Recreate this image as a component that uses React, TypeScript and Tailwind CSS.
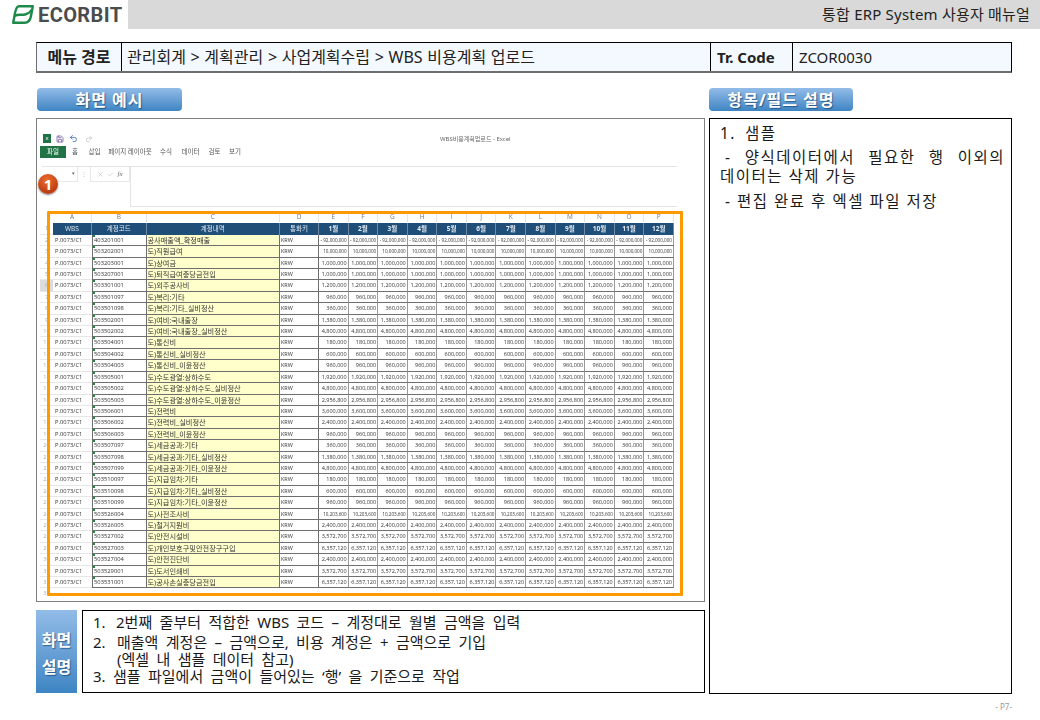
import { Check, Redo2, Save, Undo2, X } from 'lucide-react';

// code, name, monthly amount
const ROWS: [string, string, string][] = [
    ['403201001', '공사매출액_확정매출', '- 92,000,000'],
    ['503202001', '도)직원급여', '10,000,000'],
    ['503203001', '도)상여금', '1,000,000'],
    ['503207001', '도)퇴직급여충당금전입', '1,000,000'],
    ['503301001', '도)외주공사비', '1,200,000'],
    ['503501097', '도)복리:기타', '960,000'],
    ['503501098', '도)복리:기타_실비정산', '360,000'],
    ['503502001', '도)여비:국내출장', '1,380,000'],
    ['503502002', '도)여비:국내출장_실비정산', '4,800,000'],
    ['503504001', '도)통신비', '180,000'],
    ['503504002', '도)통신비_실비정산', '600,000'],
    ['503504003', '도)통신비_이윤정산', '960,000'],
    ['503505001', '도)수도광열:상하수도', '1,920,000'],
    ['503505002', '도)수도광열:상하수도_실비정산', '4,800,000'],
    ['503505003', '도)수도광열:상하수도_이윤정산', '2,956,800'],
    ['503506001', '도)전력비', '3,600,000'],
    ['503506002', '도)전력비_실비정산', '2,400,000'],
    ['503506003', '도)전력비_이윤정산', '960,000'],
    ['503507097', '도)세금공과:기타', '360,000'],
    ['503507098', '도)세금공과:기타_실비정산', '1,380,000'],
    ['503507099', '도)세금공과:기타_이윤정산', '4,800,000'],
    ['503510097', '도)지급임차:기타', '180,000'],
    ['503510098', '도)지급임차:기타_실비정산', '600,000'],
    ['503510099', '도)지급임차:기타_이윤정산', '960,000'],
    ['503526004', '도)사전조사비', '10,203,600'],
    ['503526005', '도)철거지원비', '2,400,000'],
    ['503527002', '도)안전시설비', '3,572,700'],
    ['503527003', '도)개인보호구및안전장구구입', '6,357,120'],
    ['503527004', '도)안전진단비', '2,400,000'],
    ['503529001', '도)도서인쇄비', '3,572,700'],
    ['503531001', '도)공사손실충당금전입', '6,357,120'],
];

const LETTERS = ['A', 'B', 'C', 'D', 'E', 'F', 'G', 'H', 'I', 'J', 'K', 'L', 'M', 'N', 'O', 'P'];
const MONTHS = Array.from({ length: 12 }, (_, i) => i);
const TABS = [
    ['홈', 'w-[18px]'],
    ['삽입', 'w-[21px]'],
    ['페이지 레이아웃', 'w-[50px]'],
    ['수식', 'w-[22px]'],
    ['데이터', 'w-[27px]'],
    ['검토', 'w-[21px]'],
    ['보기', 'w-[20px]'],
];

function Logo() {
    return (
        <div className="flex items-center w-[128px] h-[29px] pl-[12px] gap-[4px]">
            <svg width="22" height="19" viewBox="0 0 22 19" fill="none" stroke="#1c8a4a" strokeWidth="2.4" strokeLinejoin="round">
                <path d="M7 1.2H20.8L19 11C18.3 15 16 17.8 12.5 17.8H1.2L3 8C3.8 4 5 1.2 7 1.2Z" />
                <path d="M2.5 11C7 8.5 9 10.5 13 9.5C16 8.8 18.5 7 20 4.5" />
            </svg>
            <span className="font-['Roboto',sans-serif] font-bold text-[20px] leading-none text-[#4a4c4e] tracking-[0.4px]">ECORBIT</span>
        </div>
    );
}

function Pill({ label, width }: { label: string; width: string }) {
    return (
        <div className={`${width} h-[23px] rounded-[4px] bg-gradient-to-b from-[#92bce8] to-[#3d85c3] flex items-center justify-center text-white font-bold text-[16px] leading-none tracking-[1px] [text-shadow:1px_1px_1px_rgba(0,40,80,.55)]`}>
            {label}
        </div>
    );
}

function SheetGrid() {
    return (
        <div className="ml-[3px] mt-[5px] grid grid-cols-[13px_39px_54.5px_133.5px_39px_repeat(12,29.58px)] auto-rows-[11.42px] w-fit font-['Open_Sans','Noto_Sans_CJK_KR',sans-serif] text-[#333] leading-[11px] text-[5.5px] whitespace-nowrap">
            <div className="h-[10px]" />
            {LETTERS.map((l) => (
                <div key={l} className="h-[10px] text-center text-[#777] text-[6.5px] leading-[10px] border-r border-[#e4e4e4]">{l}</div>
            ))}

            <div className="text-center text-[#aaa] border-b border-[#e8e8e8]">1</div>
            {['WBS', '계정코드', '계정내역', '통화키'].map((h) => (
                <div key={h} className="bg-[#1f4e79] text-[#e4ecf4] text-center text-[6.5px] border-r border-[#6f8aa4]">{h}</div>
            ))}
            {MONTHS.map((m) => (
                <div key={m} className="bg-[#1f4e79] text-[#e4ecf4] font-bold text-[6.5px] text-center border-r border-[#6f8aa4]">{m + 1}월</div>
            ))}

            {ROWS.map(([code, name, amount], i) => (
                <div key={code} className="contents">
                    <div className={`text-center text-[#aaa] border-b border-[#e8e8e8] ${i === 4 ? 'bg-[#dcdcdc]' : ''}`}>{i + 2}</div>
                    <div className="pl-[2px] text-[5.8px] border-b border-[#e6e6e6]">P.0073/C1</div>
                    <div className="relative pl-[1px] text-[5.8px] border-b border-l border-r border-[#6f6f6f]">
                        <div className="absolute left-0 top-0 w-[2px] h-[2px] bg-[#1f8a3a]" />
                        {code}
                    </div>
                    <div className="pl-[1px] bg-[#ffffcc] border-b border-r border-[#6f6f6f] text-[7.2px] text-[#333]">{name}</div>
                    <div className="pl-[1px] border-b border-r border-[#6f6f6f]">KRW</div>
                    {MONTHS.map((m) => (
                        <div key={m} className={`pr-[1px] text-right border-b border-r border-b-[#6f6f6f] border-r-[#999] ${amount.length > 9 ? 'text-[4.6px]' : ''}`}>{amount}</div>
                    ))}
                </div>
            ))}
            <div className="text-center text-[#aaa]">33</div>
        </div>
    );
}

function ExcelShot() {
    return (
        <div className="relative h-[484px] border border-[#7f7f7f] bg-white">
            <div className="blur-[0.3px] pt-[13px]">
                <div className="flex items-center h-[13px] pl-[6px] text-[#666]">
                    <div className="w-[8px] h-[9px] bg-[#1e7145] text-white text-[6px] leading-[8px] text-center">x</div>
                    <Save size={8} className="ml-[5px] text-[#5d3f92]" />
                    <Undo2 size={9} className="ml-[5px] text-[#2a5ca8]" />
                    <Redo2 size={8} className="ml-[7px] text-[#bbb]" />
                    <span className="ml-[347px] text-[6px] leading-none text-[#666]">WBS비용계획업로드 - Excel</span>
                </div>
                <div className="flex items-center h-[12px] ml-[3px] mt-[1px] text-[6.5px] leading-none text-[#555]">
                    <div className="w-[26px] h-[12px] bg-[#217346] text-white flex items-center justify-center">파일</div>
                    {TABS.map(([t, w]) => (
                        <span key={t} className={`${w} text-center`}>{t}</span>
                    ))}
                </div>
                <div className="flex items-start mt-[8px] ml-[5px] border-t border-[#e4e4e4] w-[635px]">
                    <div className="w-[36px] h-[15px] border-b border-r border-[#e8e8e8] flex items-center justify-end pr-[2px] text-[5px] text-[#666]">▾</div>
                    <div className="w-[12px] h-[15px] text-center text-[6px] leading-[15px] text-[#bbb]">⋮</div>
                    <div className="w-[40px] h-[15px] flex items-center justify-center gap-[3px] border border-t-0 border-[#e8e8e8] text-[#bbb]">
                        <X size={7} />
                        <Check size={7} />
                        <span className="font-['Liberation_Serif',serif] italic text-[7px] leading-none text-[#666]">fx</span>
                    </div>
                    <div className="flex-1 h-[40px] border-b border-l border-[#e4e4e4]" />
                </div>
                <SheetGrid />
            </div>
            {/* callout marks drawn over the captured sheet */}
            <div className="absolute left-[10px] top-[92px] w-[636px] h-[385px] border-[3px] border-[#ff9900] rounded-[1px]" />
            <div className="absolute left-[1px] top-[55px] w-[20px] h-[20px] rounded-full bg-[radial-gradient(circle_at_45%_30%,#ee6c2e,#a92a08)] text-white font-bold text-[15px] leading-[20px] text-center shadow-[0_1px_2px_rgba(0,0,0,.5)]">1</div>
        </div>
    );
}

export default function App() {
    return (
        <div className="font-['Noto_Sans','Noto_Sans_CJK_KR',sans-serif] w-[1040px] h-[720px] overflow-hidden bg-white text-[#222]">
            <header className="flex h-[29px]">
                <Logo />
                <div className="flex-1 bg-[#d9d9d9] flex items-center justify-end pr-[10px] text-[15px] leading-none tracking-[0.2px]">
                    통합 ERP System 사용자 매뉴얼
                </div>
            </header>

            <main className="pl-[36px] pr-[28px]">
                <div className="mt-[13px] grid grid-cols-[84px_589px_82px_221px] h-[31px] bg-[#f4f9ff] border-t border-t-black border-b-2 border-b-[#6e6e6e] border-l border-l-[#6e6e6e] border-r border-r-black text-[15px] leading-none">
                    <div className="flex items-center justify-center font-bold text-[16px]">메뉴 경로</div>
                    <div className="flex items-center pl-[5px] border-l border-black text-[16px] [word-spacing:0.5px]">관리회계 &gt; 계획관리 &gt; 사업계획수립 &gt; WBS 비용계획 업로드</div>
                    <div className="flex items-center pl-[6px] border-l border-black font-bold">Tr. Code</div>
                    <div className="flex items-center pl-[6px] border-l border-black">ZCOR0030</div>
                </div>

                <div className="flex gap-[4px] mt-[15px]">
                    <div className="w-[669px]">
                        <div className="pl-[1px]">
                            <Pill label="화면 예시" width="w-[145px]" />
                        </div>
                        <div className="mt-[7px]">
                            <ExcelShot />
                        </div>
                        <div className="flex gap-[5px] mt-[8px] h-[83px]">
                            <div className="w-[41px] pt-[3px] bg-gradient-to-b from-[#92bce8] to-[#3d85c3] flex flex-col items-center justify-center gap-[9px] text-white font-bold text-[16px] leading-[18px] [text-shadow:1px_1px_1px_rgba(0,40,80,.55)]">
                                <span>화면</span>
                                <span>설명</span>
                            </div>
                            <ol className="flex-1 border border-black pl-[10px] pt-[3px] text-[15px] leading-[17px] [word-spacing:3.5px] text-[#1a1a1a]">
                                <li className="flex"><span className="w-[23px]">1.</span>2번째 줄부터 적합한 WBS 코드 – 계정대로 월별 금액을 입력</li>
                                <li className="flex mt-[3px]"><span className="w-[24px]">2.</span>매출액 계정은 – 금액으로, 비용 계정은 + 금액으로 기입</li>
                                <li className="pl-[24px]">(엑셀 내 샘플 데이터 참고)</li>
                                <li className="flex"><span className="w-[20px]">3.</span>샘플 파일에서 금액이 들어있는 ‘행’ 을 기준으로 작업</li>
                            </ol>
                        </div>
                    </div>

                    <div className="w-[303px]">
                        <Pill label="항목/필드 설명" width="w-[144px]" />
                        <div className="mt-[7px] h-[576px] border border-black pl-[10px] pr-[6px] pt-[4px] text-[15.5px] leading-[20px] tracking-[1.5px] text-[#1a1a1a]">
                            <p><span className="mr-[9px]">1.</span>샘플</p>
                            <p className="mt-[5px] leading-[19px]">
                                <span className="block pl-[5px] [text-align-last:justify]">- 양식데이터에서 필요한 행 이외의</span>
                                <span className="block">데이터는 삭제 가능</span>
                            </p>
                            <p className="mt-[5px] pl-[5px]">- 편집 완료 후 엑셀 파일 저장</p>
                        </div>
                    </div>
                </div>

                <div className="mt-[8px] text-right text-[8px] leading-[10px] text-[#999]">- P7-</div>
            </main>
        </div>
    );
}
